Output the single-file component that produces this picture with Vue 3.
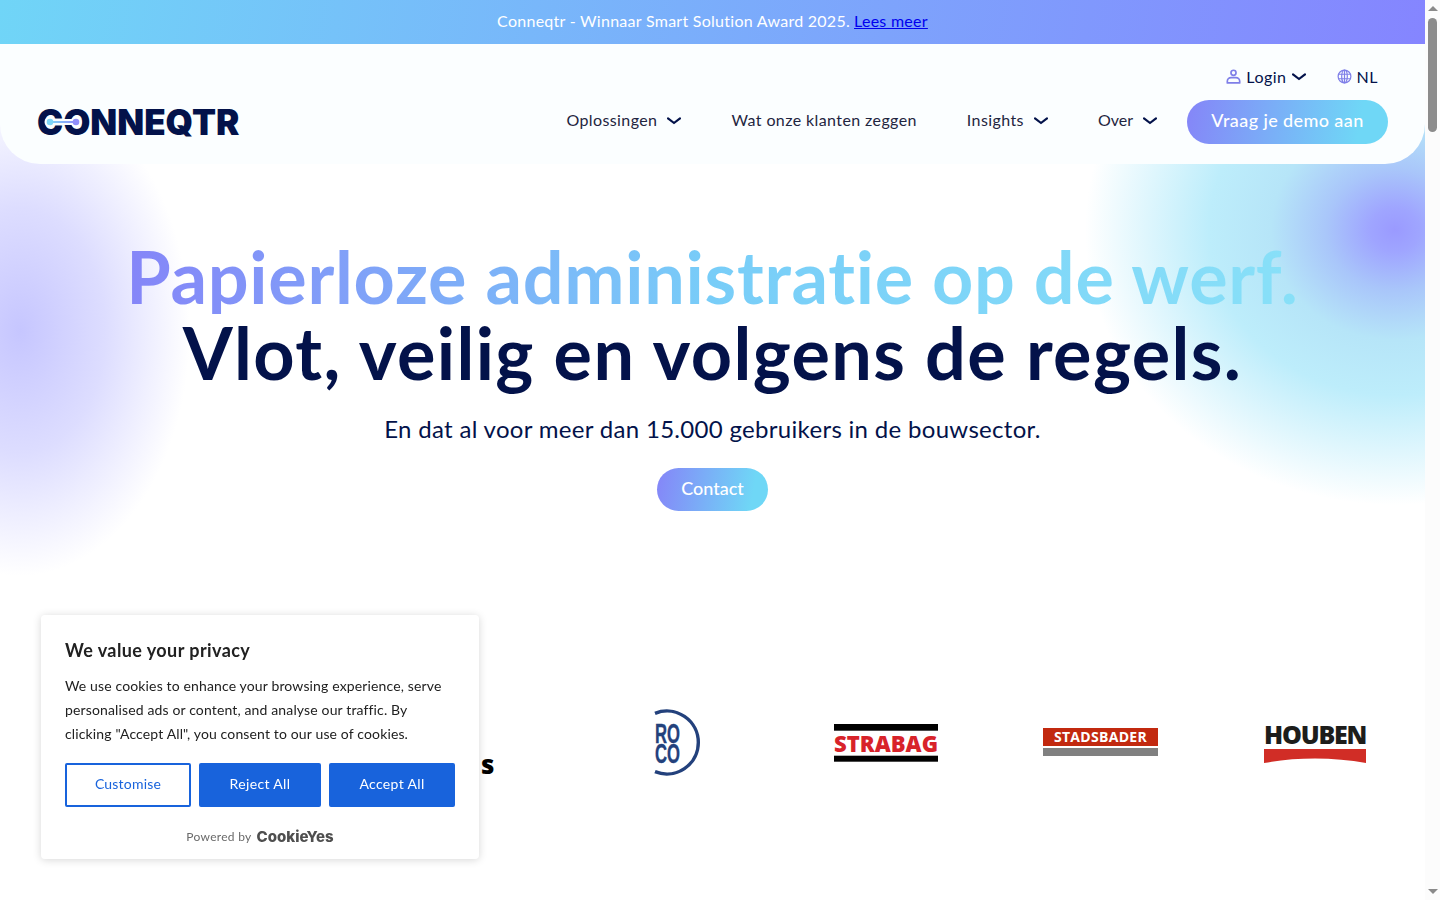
<template>
  <div class="page">
    <main class="site">
      <div class="announce">
        <span>Conneqtr - Winnaar Smart Solution Award 2025.</span>
        <a href="#">Lees meer</a>
      </div>

      <div class="stage">
        <div class="glow glow-left"></div>
        <div class="glow glow-right"></div>

        <header class="header">
          <div class="top-links">
            <a class="top-link" href="#">
              <svg class="top-icon" viewBox="0 0 16 16" fill="none" stroke="#7f7fe8" stroke-width="1.8">
                <circle cx="8" cy="4" r="2.7" />
                <path d="M1.4 14.800h13.200v-1.800c0-2.200-1.800-3.800-4-3.800H5.400c-2.200 0-4 1.600-4 3.800z" stroke-linejoin="round" />
              </svg>
              Login
              <svg class="chev" viewBox="0 0 14 8" fill="none"><path d="M1 1.400 7 6l6-4.600" /></svg>
            </a>
            <a class="top-link" href="#">
              <svg class="top-icon" viewBox="0 0 16 16" fill="none" stroke="#7f7fe8" stroke-width="1.300">
                <circle cx="8" cy="8" r="6.800" />
                <ellipse cx="8" cy="8" rx="3" ry="6.800" />
                <path d="M1.400 5.600h13.200M1.400 10.400h13.200M8 1.200v13.600" />
              </svg>
              NL
            </a>
          </div>
          <div class="main-row">
            <a class="logo" href="#">
              <span class="logo-word">CONNEQTR</span>
              <svg class="logo-link" viewBox="0 0 40 12">
                <defs>
                  <linearGradient id="logoLine" x1="0" x2="1" y1="0" y2="0">
                    <stop offset="0" stop-color="#7fd6f7" />
                    <stop offset="1" stop-color="#8f8ffb" />
                  </linearGradient>
                </defs>
                <rect x="7" y="3" width="26" height="6" fill="#fbfeff" />
                <circle cx="7" cy="6" r="5.500" fill="#fbfeff" />
                <circle cx="33" cy="6" r="5.500" fill="#fbfeff" />
                <rect x="7" y="5" width="26" height="2" fill="url(#logoLine)" />
                <circle cx="7" cy="6" r="3.300" fill="#7fd6f7" />
                <circle cx="33" cy="6" r="3.300" fill="#8f8ffb" />
              </svg>
            </a>
            <nav class="nav">
              <a v-for="item in navItems" :key="item.label" class="nav-link" href="#">
                {{ item.label }}
                <svg v-if="item.dropdown" class="chev" viewBox="0 0 14 8" fill="none"><path d="M1 1.400 7 6l6-4.600" /></svg>
              </a>
            </nav>
            <a class="demo-btn" href="#">Vraag je demo aan</a>
          </div>
        </header>

        <section class="hero">
          <h1>
            <span class="grad">Papierloze administratie op de werf.</span>
            <span class="dark">Vlot, veilig en volgens de regels.</span>
          </h1>
          <p>En dat al voor meer dan 15.000 gebruikers in de bouwsector.</p>
          <a class="contact" href="#">Contact</a>
        </section>

        <section class="logos">
          <span class="client-s">s</span>

          <svg class="client roco" viewBox="0 0 50 68">
            <path d="M4 4.300A31.500 31.500 0 1 1 4 62.700" fill="none" stroke="#23417c" stroke-width="3.400" />
            <text x="4" y="33.700" class="roco-text" textLength="25" lengthAdjust="spacingAndGlyphs">RO</text>
            <text x="4" y="53.700" class="roco-text" textLength="25" lengthAdjust="spacingAndGlyphs">CO</text>
          </svg>

          <svg class="client strabag" viewBox="0 0 104 38">
            <rect width="104" height="6.700" fill="#000" />
            <text x="0" y="27.700" class="strabag-text" textLength="104" lengthAdjust="spacingAndGlyphs">STRABAG</text>
            <rect y="31.700" width="104" height="6" fill="#000" />
          </svg>

          <div class="client stadsbader">
            <span>STADSBADER</span>
            <i></i>
          </div>

          <div class="client houben">
            <span>HOUBEN</span>
            <svg viewBox="0 0 102 14" preserveAspectRatio="none"><path d="M0 0h102v14C70 8 32 8 0 14z" fill="#d12d26" /></svg>
          </div>
        </section>
      </div>
    </main>

    <aside class="scrollbar">
      <span class="arrow up"></span>
      <span class="thumb"></span>
      <span class="arrow down"></span>
    </aside>

    <div class="cookie">
      <h2>We value your privacy</h2>
      <p>We use cookies to enhance your browsing experience, serve personalised ads or content, and analyse our traffic. By clicking "Accept All", you consent to our use of cookies.</p>
      <div class="cookie-btns">
        <button type="button" class="outline">Customise</button>
        <button type="button">Reject All</button>
        <button type="button">Accept All</button>
      </div>
      <div class="powered">
        <span>Powered by</span>
        <b>CookieYes</b>
      </div>
    </div>
  </div>
</template>

<script setup>
const navItems = [
  { label: 'Oplossingen', dropdown: true },
  { label: 'Wat onze klanten zeggen', dropdown: false },
  { label: 'Insights', dropdown: true },
  { label: 'Over', dropdown: true }
]
</script>

<style>
html,
body {
  margin: 0;
  height: 100%;
  overflow: hidden;
  background: #fff;
}
</style>

<style scoped>
.page {
  display: flex;
  height: 900px;
  overflow: hidden;
  font-family: 'Lato', 'Noto Sans', sans-serif;
  font-variant-ligatures: none;
  color: #03124a;
}

.site {
  flex: 1;
  min-width: 0;
}

.announce {
  box-sizing: border-box;
  display: flex;
  justify-content: center;
  align-items: center;
  gap: 4px;
  height: 44px;
  padding-bottom: 4px;
  color: #fff;
  font-size: 16px;
  letter-spacing: 0.27px;
  background: linear-gradient(100deg, #70d5f7 0%, #8585ff 100%);
}

.announce a {
  color: #0000ee;
  text-decoration: underline;
}

.stage {
  position: relative;
  height: 856px;
  overflow: hidden;
}

.glow {
  position: absolute;
  pointer-events: none;
  border-radius: 50%;
}

.glow-left {
  left: -150px;
  top: 42px;
  width: 340px;
  height: 490px;
  background: radial-gradient(closest-side, #c6c6ff 0%, rgba(200, 200, 255, 0.62) 50%, rgba(255, 255, 255, 0) 100%);
}

.glow-right {
  left: 1085px;
  top: -89px;
  width: 620px;
  height: 550px;
  background: radial-gradient(
    closest-side,
    #9a9aff 0%,
    #9fa5ff 8%,
    #a9c6fa 22%,
    #b6e5f8 40%,
    #bdedfb 60%,
    #def6fd 80%,
    rgba(255, 255, 255, 0) 100%
  );
}

.header {
  position: relative;
  box-sizing: border-box;
  height: 120px;
  padding: 20px 37px 20px 37px;
  background: #fbfeff;
  border-radius: 0 0 40px 40px;
}

.top-links {
  display: flex;
  justify-content: flex-end;
  align-items: center;
  gap: 31px;
  height: 28px;
  margin-top: -2px;
  margin-bottom: 10px;
  padding-right: 10px;
}

.top-link {
  display: flex;
  align-items: center;
  gap: 5px;
  color: #03124a;
  font-size: 16px;
  letter-spacing: 0.5px;
  text-decoration: none;
}

.top-icon {
  width: 15px;
  height: 15px;
}

.main-row {
  display: flex;
  align-items: center;
  height: 44px;
}

.logo {
  position: relative;
  display: block;
  margin-right: auto;
  text-decoration: none;
}

.logo-word {
  display: block;
  font-family: 'Inter', sans-serif;
  font-size: 35px;
  font-weight: 900;
  line-height: 44px;
  color: #03124a;
}

.logo-link {
  position: absolute;
  left: 6px;
  top: 16px;
  width: 40px;
  height: 12px;
}

.nav {
  display: flex;
  align-items: center;
  gap: 50px;
  margin-right: 30px;
  margin-bottom: 5px;
}

.nav-link {
  display: flex;
  align-items: center;
  gap: 10px;
  color: #1f2540;
  font-size: 16px;
  letter-spacing: 0.4px;
  text-decoration: none;
}

.nav-link:last-child {
  letter-spacing: 0;
}

.chev {
  width: 14px;
  height: 8px;
  margin-top: 2px;
}

.chev path {
  stroke: #03124a;
  stroke-width: 2.200;
  stroke-linecap: round;
  stroke-linejoin: round;
}

.demo-btn {
  box-sizing: border-box;
  display: flex;
  align-items: center;
  justify-content: center;
  width: 201px;
  height: 44px;
  padding-bottom: 4px;
  border-radius: 22px;
  color: #fff;
  font-size: 18px;
  font-weight: 500;
  letter-spacing: 0.4px;
  text-decoration: none;
  background: linear-gradient(100deg, #8585f8 0%, #6fd7f6 85%);
}

.hero {
  position: relative;
  text-align: center;
  padding-top: 74px;
}

.hero h1 {
  margin: 0;
  font-size: 72px;
  font-weight: 700;
  line-height: 76px;
}

.hero h1 span {
  display: block;
}

.hero h1 .dark {
  letter-spacing: 1.36px;
}

.hero h1 .grad {
  width: fit-content;
  margin: 0 auto;
  color: transparent;
  letter-spacing: 0.7px;
  background: linear-gradient(90deg, #8585f8 0%, #78cdf8 50%, #88e0f8 100%);
  -webkit-background-clip: text;
  background-clip: text;
}

.hero p {
  margin: 21px 0 21px;
  font-size: 24px;
  line-height: 36px;
  letter-spacing: 0.31px;
}

.contact {
  box-sizing: border-box;
  display: inline-flex;
  align-items: center;
  justify-content: center;
  width: 111px;
  height: 43px;
  padding-bottom: 3px;
  border-radius: 22px;
  color: #fff;
  font-size: 18px;
  font-weight: 500;
  text-decoration: none;
  background: linear-gradient(100deg, #8585f8 0%, #6fd7f6 85%);
}

.logos {
  position: absolute;
  left: 0;
  right: 0;
  top: 640px;
  height: 100px;
}

.client,
.client-s {
  position: absolute;
}

.client-s {
  left: 481px;
  top: 60px;
  font-family: 'Open Sans', sans-serif;
  font-size: 26px;
  font-weight: 800;
  line-height: 40px;
  color: #000;
}

.roco {
  left: 651px;
  top: 25px;
  width: 50px;
  height: 68px;
}

.roco-text {
  font-family: 'Liberation Sans', sans-serif;
  font-size: 27px;
  font-weight: 700;
  fill: #23417c;
  stroke: #23417c;
  stroke-width: 0.4;
}

.strabag {
  left: 834px;
  top: 40px;
  width: 104px;
  height: 38px;
  overflow: visible;
}

.strabag-text {
  font-family: 'Open Sans', sans-serif;
  font-size: 23.500px;
  font-weight: 800;
  fill: #d8232a;
}

.stadsbader {
  left: 1043px;
  top: 44px;
  width: 115px;
}

.stadsbader span {
  display: block;
  height: 18px;
  font-family: 'Open Sans', sans-serif;
  font-size: 14px;
  font-weight: 700;
  line-height: 18px;
  letter-spacing: 0.3px;
  text-align: center;
  color: #fff;
  background: #c2290f;
}

.stadsbader i {
  display: block;
  height: 8px;
  margin-top: 2px;
  background: #808080;
}

.houben {
  left: 1264px;
  top: 38px;
  width: 102px;
}

.houben span {
  display: block;
  font-family: 'Open Sans', sans-serif;
  font-size: 25px;
  font-weight: 800;
  line-height: 24px;
  letter-spacing: -1.200px;
  white-space: nowrap;
  color: #1d1d1b;
}

.houben svg {
  display: block;
  width: 102px;
  height: 14px;
  margin-top: 3px;
}

.scrollbar {
  flex: 0 0 15px;
  position: relative;
  display: flex;
  flex-direction: column;
  align-items: center;
  background: #fcfcfc;
}

.arrow {
  width: 0;
  height: 0;
  border-left: 5px solid transparent;
  border-right: 5px solid transparent;
}

.arrow.up {
  margin-top: 6px;
  border-bottom: 5px solid #8a8a8a;
}

.arrow.down {
  margin-top: auto;
  margin-bottom: 6px;
  border-top: 5px solid #8a8a8a;
}

.thumb {
  width: 9px;
  height: 114px;
  margin-top: 7px;
  border-radius: 5px;
  background: #8c8c8c;
}

.cookie {
  position: fixed;
  left: 41px;
  top: 615px;
  box-sizing: border-box;
  width: 438px;
  height: 244px;
  padding: 24px;
  border-radius: 4px;
  background: #fff;
  box-shadow: 0 1px 9px rgba(0, 0, 0, 0.16);
  color: #212121;
}

.cookie h2 {
  margin: -1px 0 0;
  font-size: 18px;
  font-weight: 700;
  line-height: 24px;
  letter-spacing: 0.42px;
}

.cookie p {
  max-width: 380px;
  margin: 12px 0 17px;
  font-size: 14px;
  line-height: 24px;
  letter-spacing: 0.14px;
}

.cookie-btns {
  display: grid;
  grid-template-columns: 126px 122px 126px;
  gap: 8px;
}

.cookie-btns button {
  height: 44px;
  padding: 0 0 3px;
  border: 2px solid #1863dc;
  border-radius: 2px;
  background: #1863dc;
  color: #fff;
  font: 14px 'Lato', 'Noto Sans', sans-serif;
  letter-spacing: 0.35px;
}

.cookie-btns .outline {
  background: #fff;
  color: #1863dc;
  letter-spacing: 0.2px;
}

.powered {
  display: flex;
  justify-content: center;
  align-items: center;
  gap: 5px;
  margin-top: 20px;
  font-size: 12px;
  letter-spacing: 0.3px;
  color: #6a6a6a;
}

.powered b {
  font-family: 'Inter', sans-serif;
  font-size: 15px;
  font-weight: 800;
  letter-spacing: 0;
  color: #4f4f4f;
}
</style>
